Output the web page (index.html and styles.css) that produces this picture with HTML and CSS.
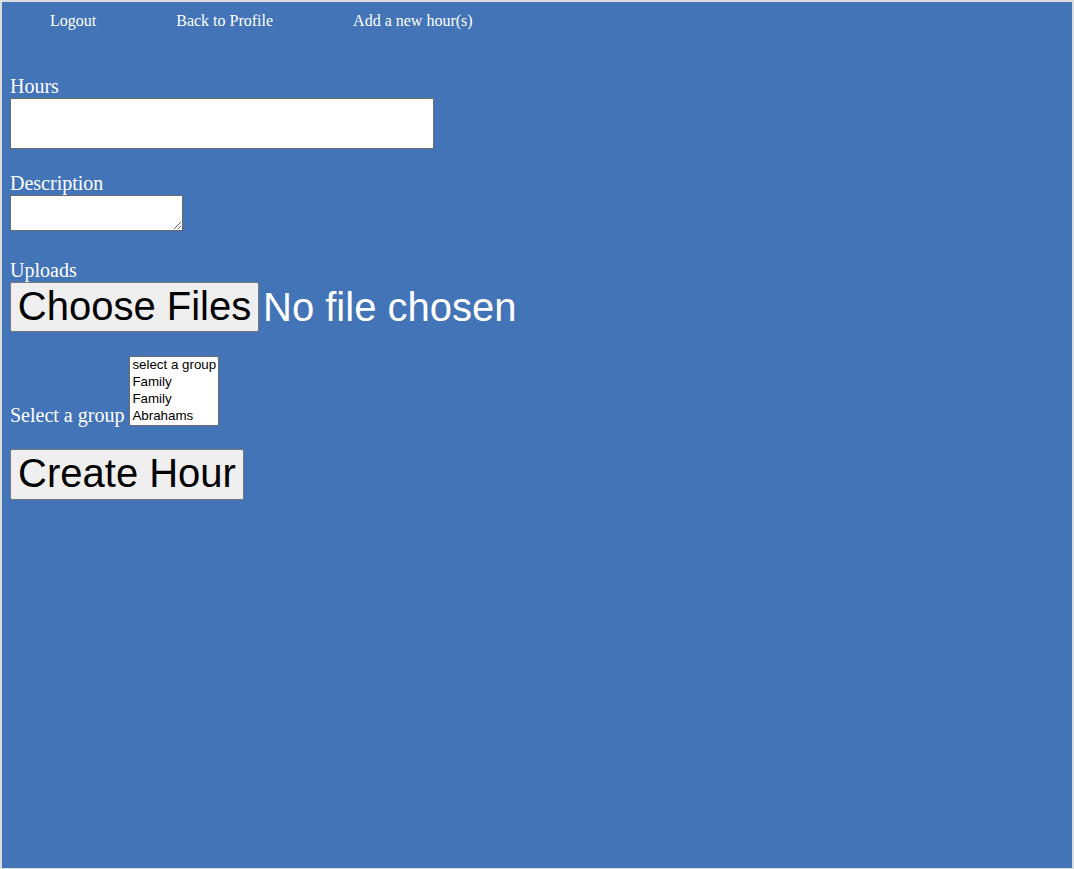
FILE: index.html
```html
<!DOCTYPE html>
<html>
<head>
<meta charset="utf-8">
<title>Add a new hour</title>
<link rel="stylesheet" href="styles.css">
</head>
<body>
<div class="page">
  <nav class="nav">
    <a class="nav-link" href="#">Logout</a>
    <a class="nav-link" href="#">Back to Profile</a>
    <a class="nav-link" href="#">Add a new hour(s)</a>
  </nav>
  <form class="form">
    <div class="field">
      <label class="label" for="hours">Hours</label>
      <input class="text-input" id="hours" type="text">
    </div>
    <div class="field field-desc">
      <label class="label" for="desc">Description</label>
      <textarea class="textarea" id="desc"></textarea>
    </div>
    <div class="field field-uploads">
      <label class="label" for="files">Uploads</label>
      <div class="file-row">
        <span class="file-btn">Choose Files</span>
        <span class="file-status">No file chosen</span>
      </div>
    </div>
    <div class="field field-group">
      <label class="label-inline" for="group">Select a group</label>
      <select class="group-select" id="group" size="4">
        <option>select a group</option>
        <option>Family</option>
        <option>Family</option>
        <option>Abrahams</option>
      </select>
    </div>
    <div class="field field-submit">
      <button class="submit-btn" type="button">Create Hour</button>
    </div>
  </form>
</div>
</body>
</html>
```
FILE: styles.css
```css
html, body {
  margin: 0;
  padding: 0;
}
body {
  background: #dcdcdc;
  padding: 2px 2px 1px 2px;
  font-family: "Liberation Serif", "Times New Roman", serif;
}
.page {
  background: #4274b7;
  height: 866px;
  padding: 0 8px;
  box-sizing: border-box;
  color: #fff;
}
.nav {
  display: flex;
  padding-top: 10px;
  font-size: 16px;
  line-height: 18px;
}
.nav-link {
  color: #fff;
  text-decoration: none;
  padding: 0 40px;
}
.form {
  display: flex;
  flex-direction: column;
  align-items: flex-start;
  margin-top: 45px;
}
.field {
  display: flex;
  flex-direction: column;
  align-items: flex-start;
}
.label {
  font-size: 20px;
  line-height: 23px;
  display: block;
}
.text-input {
  width: 424px;
  height: 51px;
  box-sizing: border-box;
  border: 1px solid #6b6b6b;
  background: #fff;
  margin: 0;
  padding: 0 4px;
}
.field-desc {
  margin-top: 23px;
}
.textarea {
  width: 173px;
  height: 36px;
  box-sizing: border-box;
  border: 1px solid #6b6b6b;
  background: #fff;
  margin: 0;
  resize: both;
}
.field-uploads {
  margin-top: 28px;
}
.file-row {
  display: flex;
  align-items: center;
  font-family: "Liberation Sans", Arial, sans-serif;
  font-size: 40px;
}
.file-btn {
  display: inline-block;
  box-sizing: border-box;
  height: 50px;
  width: 249px;
  line-height: 47px;
  text-align: center;
  background: #efefef;
  color: #000;
  border: 1px solid #767676;
  border-radius: 2px;
}
.file-status {
  margin-left: 4px;
  color: #fff;
  line-height: 47px;
}
.field-group {
  margin-top: 24px;
  flex-direction: row;
  align-items: flex-end;
}
.label-inline {
  font-size: 20px;
  line-height: 23px;
  margin-right: 5px;
  margin-bottom: -1px;
}
.group-select {
  width: 90px;
  height: 70px;
  box-sizing: border-box;
  border: 1px solid #6b6b6b;
  background: #fff;
  font-family: "Liberation Sans", Arial, sans-serif;
  font-size: 13.33px;
  margin: 0;
  padding: 0;
  overflow: hidden;
}
.group-select option {
  padding: 0 2px 1px 2px;
  color: #000;
}
.field-submit {
  margin-top: 23px;
}
.submit-btn {
  box-sizing: border-box;
  height: 51px;
  width: 234px;
  padding: 0 0 3px;
  font-family: "Liberation Sans", Arial, sans-serif;
  font-size: 40px;
  background: #efefef;
  color: #000;
  border: 1px solid #767676;
  border-radius: 2px;
  margin: 0;
}
```
